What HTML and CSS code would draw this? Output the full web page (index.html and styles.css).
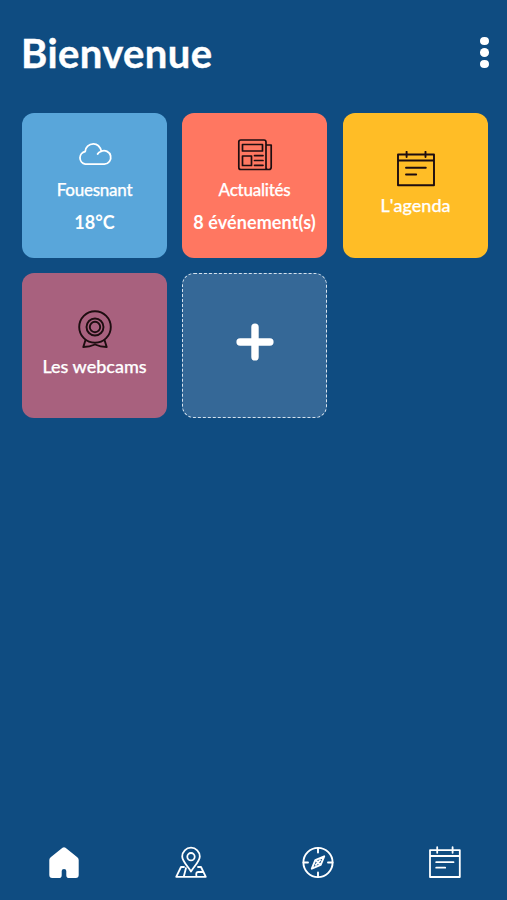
FILE: index.html
```html
<!DOCTYPE html>
<html lang="fr">
<head>
    <meta charset="UTF-8">
    <meta name="viewport" content="width=device-width, initial-scale=1.0">
    <title>Bienvenue</title>
    <link rel="stylesheet" href="styles.css">
</head>
<body>
    <header class="header">
        <h1>Bienvenue</h1>
        <button class="menu" aria-label="Menu">
            <span></span><span></span><span></span>
        </button>
    </header>

    <!-- Widgets -->
    <main class="tiles">
        <a class="tile weather">
            <svg class="icon" width="36" height="24" viewBox="0 0 36 24" stroke-width="1.8">
                <path d="M8.3 22.1H27.4A6.7 6.7 0 1 0 24.3 9.3M24.3 9.3C23.1 4.4 20 1.9 16.4 1.9C11.8 1.9 8.4 5.4 8.2 9.5A6.4 6.4 0 0 0 8.3 22.1M24.3 9.3Q21.6 10 20.6 12"/>
            </svg>
            <span class="label">Fouesnant</span>
            <span class="value">18°C</span>
        </a>
        <a class="tile news">
            <svg class="icon" width="36" height="34" viewBox="0 0 36 34" stroke-width="1.7">
                <path d="M29 30.5V4.2Q29 2 27 2H3.8Q1.8 2 1.8 4V29.5Q1.8 31.5 3.8 31.5H32Q34.2 31.5 34.2 29V7H29M29 29.5Q29.2 31.5 31 31.5"/>
                <path d="M5.5 6.5H25.5V13H5.5ZM5.5 18H14.5V27.5H5.5ZM17.5 17.6H26M17.5 22.5H26M17.5 27.3H26"/>
            </svg>
            <span class="label">Actualités</span>
            <span class="value">8 événement(s)</span>
        </a>
        <a class="tile agenda">
            <svg class="icon" width="38" height="36" viewBox="0 0 38 36" stroke-width="1.9">
                <path d="M1 3.5H37V34.3H1ZM1 9.5H37M9.6 .8V6M28.5 .8V6M9 16.7H28.8M9 23.5H19.2"/>
            </svg>
            <span class="label">L'agenda</span>
        </a>
        <a class="tile webcams">
            <svg class="icon" width="36" height="38" viewBox="0 0 36 38" stroke-width="1.9">
                <circle cx="18" cy="17" r="15.8"/>
                <circle cx="18" cy="17" r="8.5"/>
                <circle cx="18" cy="17" r="5.2"/>
                <path d="M8.5 30L6.3 37Q12.5 37 18 34.5Q23.5 37 29.7 37L27.5 30"/>
            </svg>
            <span class="label">Les webcams</span>
        </a>
        <button class="tile add" aria-label="Ajouter">
            <svg class="plus" width="38" height="38" viewBox="0 0 38 38" stroke-width="7.4">
                <path d="M19 4.1V33.9M4.1 19H33.9"/>
            </svg>
        </button>
    </main>

    <!-- Bottom navigation -->
    <nav class="navbar">
        <a>
            <svg width="34" height="34" viewBox="0 0 34 34">
                <path class="solid" d="M16.5 1.8Q18 .6 19.5 1.8L31.3 11.2Q32.7 12.4 32.7 14V29Q32.7 32 29.8 32H23Q20.3 32 20.3 29.2V25Q20.3 23 18 23Q15.7 23 15.7 25V29.2Q15.7 32 13 32H6.2Q3.3 32 3.3 29V14Q3.3 12.4 4.7 11.2Z"/>
            </svg>
        </a>
        <a>
            <svg width="34" height="34" viewBox="-1 0 34 34" stroke-width="1.8">
                <path d="M17 25.5C13.5 20 8.2 15 8.2 10.5A8.8 8.8 0 0 1 25.8 10.5C25.8 15 20.5 20 17 25.5Z"/>
                <circle cx="17" cy="10.7" r="3.7"/>
                <path d="M10 21H7L2.2 30.8H31.8L27 21H24M12 22L9.8 30.5M22.5 30.5Q21.5 26 24 26H29"/>
            </svg>
        </a>
        <a>
            <svg width="34" height="34" viewBox="0 0 34 34" stroke-width="1.9">
                <circle cx="18" cy="16.5" r="14.6"/>
                <path d="M18 2V6.5M18 26.5V31M3.5 16.5H8M28 16.5H32.5M24.2 10.3L20.7 18.8L11.8 22.7L15.3 14.2ZM15.8 14.2L20.2 18.8M20.2 14.2L15.8 18.8"/>
            </svg>
        </a>
        <a>
            <svg width="34" height="34" viewBox="0 0 34 34" stroke-width="1.8">
                <path d="M3 4.1H32.8V31H3ZM3 10H32.8M10.2 1.2V6.8M25.6 1.2V6.8M9.2 16.2H26.5M9.2 21.7H18.2"/>
            </svg>
        </a>
    </nav>
</body>
</html>
```
FILE: styles.css
```css
* { box-sizing: border-box; }
body { margin: 0; height: 900px; display: flex; flex-direction: column; background-color: #0f4c81; color: #fff; font-family: Lato, "Liberation Sans", sans-serif; }
button { padding: 0; border: none; background: none; color: inherit; cursor: pointer; }
svg { display: block; fill: none; stroke: #fff; stroke-linecap: round; stroke-linejoin: round; }
.header { display: flex; justify-content: space-between; height: 113px; padding: 29px 18px 0 21px; }
h1 { margin: 0; font-size: 40px; line-height: 48px; font-weight: 700; letter-spacing: 0.4px; -webkit-text-stroke: 0.4px #fff; }
.menu { display: flex; flex-direction: column; gap: 3px; align-self: flex-start; padding-top: 7.5px; }
.menu span { width: 9px; height: 8.5px; border-radius: 50%; background-color: #fff; }
.tiles { display: grid; grid-template-columns: 145px 146px 145px; grid-auto-rows: 145px; gap: 15px; flex: 1; padding-left: 22px; }
.tile { display: flex; flex-direction: column; align-items: center; width: 145px; border-radius: 12px; white-space: nowrap; }
.icon { stroke: #1d0d10; }
.label { font-size: 17px; line-height: 20px; font-weight: 500; letter-spacing: -0.25px; -webkit-text-stroke: 0.25px #fff; }
.value { margin-top: 12px; font-size: 18px; line-height: 20px; font-weight: 700; letter-spacing: 0.1px; }
.weather { background-color: #59a6da; padding-top: 29px; }
.weather .icon { stroke: #fff; }
.weather .label { margin-top: 14px; }
.news { background-color: #ff7761; padding-top: 25px; }
.news .label { margin-top: 8px; }
.agenda { background-color: #ffbd26; padding-top: 38px; }
.webcams { background-color: #a8617e; padding-top: 37px; }
.agenda .label, .webcams .label { margin-top: 8px; font-size: 18px; letter-spacing: 0; }
.agenda .label { font-kerning: none; }
.add { justify-content: center; background-color: #356897; border: 1px dashed #d5e2ee; padding-bottom: 7px; }
.navbar { display: grid; grid-template-columns: repeat(4, 1fr); height: 54px; }
.navbar a { display: flex; justify-content: center; }
.solid { fill: #fff; stroke: none; }
```
